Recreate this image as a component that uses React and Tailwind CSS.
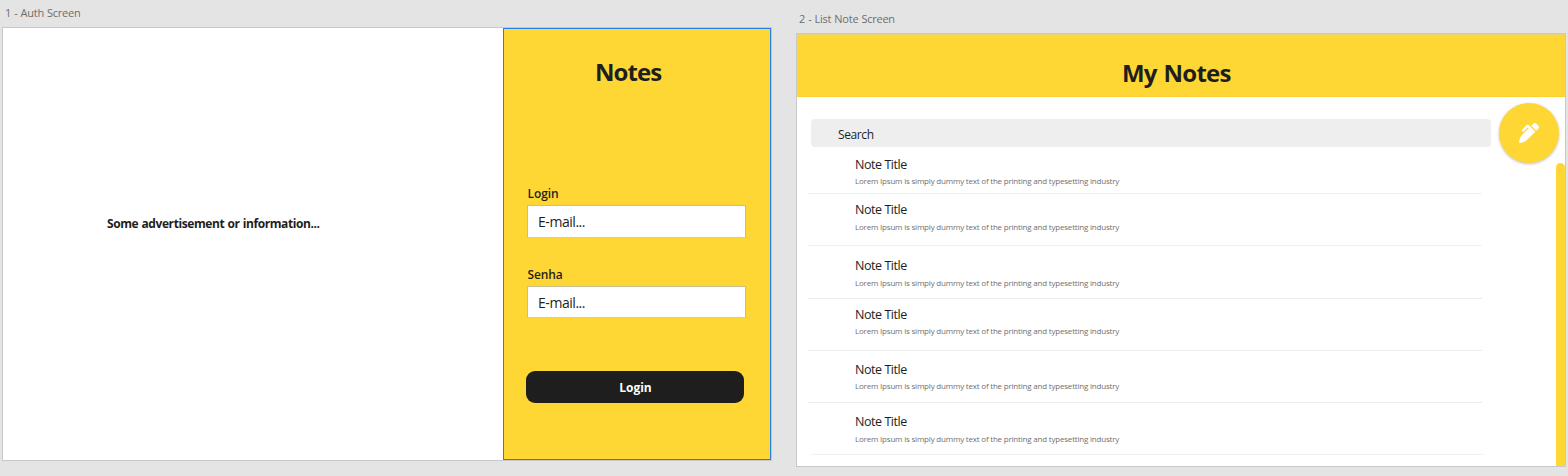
import { FaPenAlt } from "react-icons/fa";

const NOTES = [
  { row: "h-[47px] pt-[10px]", gap: "mt-0", line: "bg-[#f1f1f1]" },
  { row: "h-[52px] pt-[8px]", gap: "mt-[1px]", line: "bg-[#f1f1f1]" },
  { row: "h-[53px] pt-[12px]", gap: "mt-[1px]", line: "bg-[#ececec]" },
  { row: "h-[52px] pt-[8px]", gap: "mt-0", line: "bg-[#ececec]" },
  { row: "h-[52px] pt-[11px]", gap: "mt-0", line: "bg-[#ececec]" },
  { row: "h-[52px] pt-[11px]", gap: "mt-[1px]", line: "bg-[#f1f1f1] ml-[3px] -mr-[2px]" },
];

function Field({ label, boxClass }) {
  return (
    <label className="block">
      <span className="block h-4 pl-[0.5px] text-[12px] leading-4 font-semibold tracking-[-0.1px]">{label}</span>
      <span
        className={`mt-[3px] flex w-[219px] items-center border border-[#c9bf8c] border-b-[#cfcdc0] bg-white pl-[10px] text-[14px] leading-5 tracking-[-0.45px] ${boxClass}`}
      >
        E-mail...
      </span>
    </label>
  );
}

function AuthScreen() {
  return (
    <section className="ml-[2px] w-[770px] pt-[5px]">
      <h2 className="h-4 pl-[3px] text-[11px] leading-4 tracking-[-0.25px] [word-spacing:0.5px] text-[#6e6e6e]">1 - Auth Screen</h2>
      <div className="mt-[6px] flex h-[434px] border border-[#c9c9c9] bg-white">
        <div className="w-[500px] pt-[188px] pl-[104px]">
          <p className="text-[12px] leading-4 font-bold tracking-[-0.4px] [word-spacing:0.4px]">Some advertisement or information...</p>
        </div>
        <form className="flex w-[268px] flex-col border border-[#2680eb] bg-[#ffd735] pt-[27px] pl-[22px]">
          <h1 className="h-8 pl-[69px] text-[24px] leading-8 font-bold tracking-[-0.9px]">Notes</h1>
          <div className="mt-[98px] pl-[1px]">
            <Field label="Login" boxClass="h-[33px]" />
          </div>
          <div className="mt-[29px] pl-[1px]">
            <Field label="Senha" boxClass="h-[32px] pt-px" />
          </div>
          <button type="button" className="mt-[53px] flex h-[32px] w-[218px] items-center justify-center rounded-[9px] bg-[#1e1e1e] pt-[2px] pl-[1px] text-[12px] leading-4 font-bold text-white">
            Login
          </button>
        </form>
      </div>
    </section>
  );
}

function ListScreen() {
  return (
    <section className="ml-[24px] w-[770px] pt-[11px]">
      <h2 className="h-4 pl-[3px] text-[11px] leading-4 tracking-[-0.25px] [word-spacing:0.5px] text-[#6e6e6e]">2 - List Note Screen</h2>
      <div className="mt-[6px] flex h-[434px] flex-col border border-[#c9c9c9] bg-white">
        <header className="h-[63px] border-y border-t-[#e8d27a] border-b-[#f9d030] bg-[#ffd735] pt-[22px] pl-[325px]">
          <h1 className="text-[24px] leading-8 font-bold tracking-[-0.8px] [word-spacing:1.5px] whitespace-nowrap">My Notes</h1>
        </header>
        <div className="flex min-h-0 flex-1">
          <main className="w-[701px] pt-[22px]">
            <div className="ml-[14px] flex h-[28px] w-[680px] items-center rounded-[4px] bg-[#eeeeee] pt-[4px] pl-[27px] text-[12px] leading-4 tracking-[-0.4px]">
              Search
            </div>
            <ul className="ml-[11px] w-[674px]">
              {NOTES.map((note, i) => (
                <li key={i} className={`flex flex-col ${note.row}`}>
                  <h3 className="h-4 pl-[47px] text-[12.5px] leading-4 tracking-[-0.45px]">Note Title</h3>
                  <p className={`h-4 pl-[47px] text-[8px] leading-4 tracking-[-0.2px] whitespace-nowrap text-[#707070] ${note.gap}`}>
                    Lorem Ipsum is simply dummy text of the printing and typesetting industry
                  </p>
                  <div className={`mt-auto h-px shrink-0 ${note.line}`} />
                </li>
              ))}
            </ul>
          </main>
          <aside className="flex w-[67px] flex-col pt-[6px]">
            <button type="button" className="ml-[0.5px] flex size-[60px] shrink-0 items-center justify-center rounded-full bg-[#ffd735] shadow-[0_1px_3px_rgba(0,0,0,0.25)]">
              <FaPenAlt className="size-[20px] text-white" />
            </button>
            <div className="ml-auto w-[9px] flex-1 rounded-t-full bg-[#ffd735]" />
          </aside>
        </div>
      </div>
    </section>
  );
}

export default function App() {
  return (
    <div className="flex h-[476px] w-[1568px] overflow-hidden bg-[#e4e4e4] font-['Open_Sans','Noto_Sans',sans-serif] text-[#1e1e1e]">
      <AuthScreen />
      <ListScreen />
    </div>
  );
}
